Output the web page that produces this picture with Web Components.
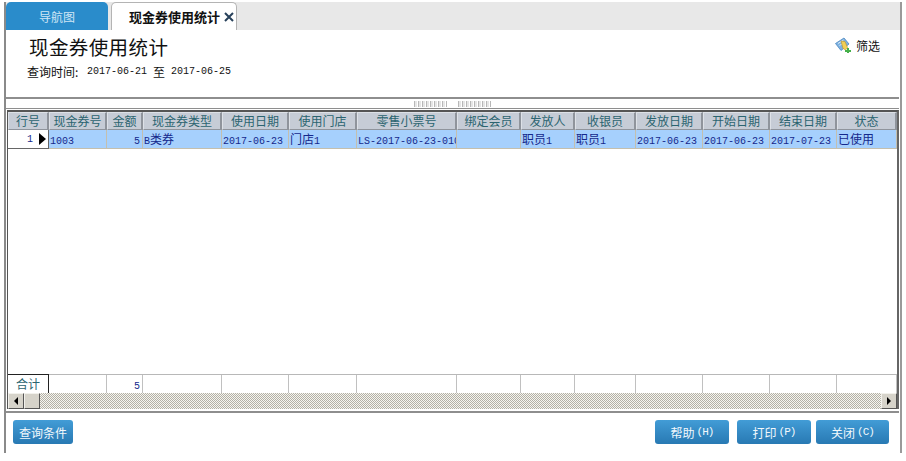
<!DOCTYPE html>
<html lang="zh">
<head>
<meta charset="utf-8">
<title>现金券使用统计</title>
<style>
  html, body { margin: 0; background: #fff; }
  body { font: 12px "Noto Sans CJK SC", sans-serif; width: 906px; height: 461px; overflow: hidden; }
</style>
</head>
<body>
<app-frame>
  <tab-strip slot="tabs">
    <strip-tab kind="nav">导航图</strip-tab>
    <strip-tab kind="active" closable>现金券使用统计</strip-tab>
  </tab-strip>
  <report-head
    title="现金券使用统计"
    from="2017-06-21"
    to="2017-06-25"></report-head>
  <split-grip></split-grip>
  <data-grid></data-grid>
  <action-bar>
    <action-button slot="left" w="60">查询条件</action-button>
    <action-button w="74">帮助<small-key>(H)</small-key></action-button>
    <action-button w="74" ml="8">打印<small-key>(P)</small-key></action-button>
    <action-button w="73" ml="5">关闭<small-key>(C)</small-key></action-button>
  </action-bar>
</app-frame>

<script>
const SANS = '"Noto Sans CJK SC", sans-serif';
const LATIN = '"Liberation Mono", "DejaVu Sans Mono", monospace';

// latin runs get the narrow mono face, the rest stays in the CJK face
const fmt = v => v.replace(/[\x21-\x7e]+/g, '<span class="l">$&</span>');

class AppFrame extends HTMLElement {
    constructor(){
        super();
        this.attachShadow({ mode: 'open' }).innerHTML = `
          <style>
            :host {
              display: flex;
              flex-direction: column;
              box-sizing: border-box;
              width: 898px;
              height: 451px;
              margin: 2px 0 0 4px;
              border-left: 2px solid #8a8a8a;
              border-right: 2px solid #9a9a9a;
            }
          </style>
          <slot name="tabs"></slot>
          <slot></slot>`;
    }
}

class TabStrip extends HTMLElement {
    constructor(){
        super();
        this.attachShadow({ mode: 'open' }).innerHTML = `
          <style>
            :host {
              display: flex;
              height: 28px;
              flex: none;
              background: #e8e8e8;
              gap: 3px;
            }
          </style>
          <slot></slot>`;
    }
}

class StripTab extends HTMLElement {
    constructor(){
        super();
        const close = this.hasAttribute('closable')
            ? '<svg width="10" height="10" viewBox="0 0 10 10"><path d="M1 1l8 8M9 1l-8 8" stroke="#27405a" stroke-width="2"/></svg>'
            : '';
        this.attachShadow({ mode: 'open' }).innerHTML = `
          <style>
            :host {
              display: flex;
              align-items: center;
              box-sizing: border-box;
              height: 28px;
              border-radius: 5px 5px 0 0;
              font-family: ${SANS};
            }
            :host([kind="nav"]) {
              width: 102px;
              padding-left: 33px;
              background: #2a8ccb;
              color: #cfe6f5;
              font-size: 12px;
            }
            :host([kind="active"]) {
              width: 126px;
              padding-left: 17px;
              background: #fff;
              border: 1px solid #b4b4b4;
              border-bottom: 0;
              color: #111;
              font-size: 13px;
              font-weight: 700;
              white-space: nowrap;
            }
            svg { margin-left: 4px; flex: none; }
          </style>
          <slot></slot>${close}`;
    }
}

class ReportHead extends HTMLElement {
    constructor(){
        super();
        this.attachShadow({ mode: 'open' }).innerHTML = `
          <style>
            :host {
              display: flex;
              justify-content: space-between;
              box-sizing: border-box;
              height: 67px;
              flex: none;
              padding: 4px 20px 0 21px;
              background: #fff;
            }
            h1 {
              margin: 0 0 0 2px;
              font: 400 19.5px/26px ${SANS};
              letter-spacing: .4px;
              color: #111;
            }
            .range { display: flex; margin-top: 4px; font: 12px/16px ${SANS}; color: #111; white-space: nowrap; }
            .range b { font: 400 10px/16px ${LATIN}; }
            .range .colon { width: 60px; }
            .range .to { margin: 0 6px; }
            .filter { display: flex; align-items: center; gap: 5px; height: 18px; margin-top: 2px; font: 12px ${SANS}; color: #111; }
            svg { display: block; }
          </style>
          <div>
            <h1>${this.getAttribute('title')}</h1>
            <div class="range"><span class="colon">查询时间:</span><b>${this.getAttribute('from')}</b><span class="to">至</span><b>${this.getAttribute('to')}</b></div>
          </div>
          <div class="filter">
            <svg width="16" height="16" viewBox="0 0 16 16">
              <path d="M.5 6.500 9 1l5 6-8 6.500z" fill="#7fb2e0" stroke="#4a86c0" stroke-width=".8"/>
              <path d="M3 6.500 8.500 3M4.500 8.500 10 5" stroke="#dcecfa"/>
              <path d="M6 4l4 .5 2.500 6-2 2.500-2.500-1.500z" fill="#f2cf55" stroke="#b8922a" stroke-width=".6"/>
              <path d="M12 11h2v2h2v2h-2v1h-2v-1h-2v-2h2z" fill="#45b04a"/>
            </svg>
            <span>筛选</span>
          </div>`;
    }
}

class SplitGrip extends HTMLElement {
    constructor(){
        super();
        this.attachShadow({ mode: 'open' }).innerHTML = `
          <style>
            :host {
              display: flex;
              justify-content: center;
              align-items: center;
              gap: 11px;
              box-sizing: border-box;
              height: 11px;
              flex: none;
              margin-right: 1px;
              border-top: 2px solid #8e8e8e;
              background: #fff;
            }
            i {
              width: 33px;
              height: 6px;
              background: repeating-linear-gradient(90deg, #b8b8b8 0 1px, #e6e6e6 1px 3px, #fff 3px 4px);
            }
          </style>
          <i></i><i></i>`;
    }
}

const COLUMNS = [
    ['现金券号', 58], ['金额', 36], ['现金券类型', 79], ['使用日期', 67], ['使用门店', 68],
    ['零售小票号', 100], ['绑定会员', 64], ['发放人', 54], ['收银员', 61], ['发放日期', 67],
    ['开始日期', 67], ['结束日期', 67], ['状态', 60]
];
const ROW = ['1003', '5', 'B类券', '2017-06-23', '门店1', 'LS-2017-06-23-010', '', '职员1', '职员1', '2017-06-23', '2017-06-23', '2017-07-23', '已使用'];
const TRACK = '41px ' + COLUMNS.map(c => c[1] + 'px').join(' ');

class DataGrid extends HTMLElement {
    constructor(){
        super();
        const head = COLUMNS.map(c => `<div class="hc">${c[0]}</div>`).join('');
        const cells = ROW.map((v, i) => `<div class="c${i === 1 ? ' right' : ''}">${fmt(v)}</div>`).join('');
        const foot = COLUMNS.map((c, i) => `<div class="fc${i === 1 ? ' right' : ''}">${i === 1 ? fmt('5') : ''}</div>`).join('');
        this.attachShadow({ mode: 'open' }).innerHTML = `
          <style>
            :host {
              display: flex;
              flex-direction: column;
              flex: none;
              box-sizing: border-box;
              height: 305px;
              margin-right: 1px;
              border-top: 1px solid #8e8e8e;
              border-bottom: 2px solid #8e8e8e;
              background: #fff;
            }
            .inner {
              flex: 1;
              display: flex;
              flex-direction: column;
              min-height: 0;
              margin: 1px 0 2px 1px;
              border: 1px solid #555;
              border-top: 2px solid #555;
              border-bottom: 0;
              border-right: 2px solid #666;
            }
            .row { display: grid; grid-template-columns: ${TRACK}; flex: none; }
            .head { height: 18px; }
            .hc {
              box-sizing: border-box;
              background: #c6ccd6;
              border-top: 1px solid #dde1e7;
              border-left: 1px solid #dde1e7;
              border-right: 2px solid #8f949c;
              border-bottom: 1px solid #8f949c;
              text-align: center;
              font: 12px/16px ${SANS};
              color: #2b6470;
              white-space: nowrap;
              overflow: hidden;
            }
            .body { height: 19px; }
            .l { font: 10px ${LATIN}; }
            .rh {
              box-sizing: border-box;
              display: flex;
              align-items: center;
              justify-content: flex-end;
              gap: 6px;
              padding-right: 2px;
              background: #fff;
              border-right: 1px solid #666;
              border-bottom: 1px solid #666;
              color: #14288c;
            }
            .rh i { width: 0; height: 0; border-left: 7px solid #000; border-top: 6px solid transparent; border-bottom: 6px solid transparent; }
            .c {
              box-sizing: border-box;
              padding-left: 1px;
              background: #a6d0fd;
              border-right: 1px solid #c4bfae;
              border-bottom: 1px solid #c4bfae;
              font: 12px/18px ${SANS};
              color: #14288c;
              white-space: nowrap;
              overflow: hidden;
            }
            .right { text-align: right; padding-right: 2px; }
            .fill { flex: 1; min-height: 0; }
            .foot { height: 18px; border-top: 1px solid #b8b8b8; }
            .fh {
              box-sizing: border-box;
              margin-top: -1px;
              border: 1px solid #222;
              border-left: 0;
              text-align: center;
              font: 12px/18px ${SANS};
              color: #2b6470;
            }
            .fc {
              box-sizing: border-box;
              border-right: 1px solid #c0c0c0;
              border-bottom: 1px solid #b8b8b8;
              font: 12px/18px ${SANS};
              color: #14288c;
            }
            .scroll {
              display: flex;
              flex: none;
              height: 16px;
              background: repeating-conic-gradient(#b4b1a6 0 25%, #f6f5f0 0 50%) 0 0 / 2px 2px;
            }
            .btn {
              box-sizing: border-box;
              width: 16px;
              height: 16px;
              background: #d6d3ca;
              border: 1px solid;
              border-color: #f2f1ec #555 #555 #f2f1ec;
              display: flex;
              align-items: center;
              justify-content: center;
            }
            .gap { flex: 1; }
            .tl { width: 0; height: 0; border-right: 4px solid #000; border-top: 4px solid transparent; border-bottom: 4px solid transparent; }
            .tr { width: 0; height: 0; border-left: 4px solid #000; border-top: 4px solid transparent; border-bottom: 4px solid transparent; }
          </style>
          <div class="inner">
            <div class="row head"><div class="hc">行号</div>${head}</div>
            <div class="row body"><div class="rh"><span class="l">1</span><i></i></div>${cells}</div>
            <div class="fill"></div>
            <div class="row foot"><div class="fh">合计</div>${foot}</div>
            <div class="scroll">
              <div class="btn"><span class="tl"></span></div>
              <div class="btn"></div>
              <div class="gap"></div>
              <div class="btn"><span class="tr"></span></div>
            </div>
          </div>`;
    }
}

class ActionBar extends HTMLElement {
    constructor(){
        super();
        this.attachShadow({ mode: 'open' }).innerHTML = `
          <style>
            :host {
              display: flex;
              align-items: flex-start;
              flex: 1;
              padding: 7px 11px 0 7px;
              background: #fff;
            }
            .left { flex: 1; display: flex; }
          </style>
          <div class="left"><slot name="left"></slot></div>
          <slot></slot>`;
    }
}

class ActionButton extends HTMLElement {
    constructor(){
        super();
        this.attachShadow({ mode: 'open' }).innerHTML = `
          <style>
            :host {
              display: flex;
              align-items: center;
              justify-content: center;
              box-sizing: border-box;
              width: ${this.getAttribute('w')}px;
              height: 24px;
              margin-left: ${this.getAttribute('ml') || 0}px;
              border-radius: 3px;
              background: linear-gradient(#429cd6, #2879b3);
              color: #f2f8fc;
              font: 12px ${SANS};
            }
          </style>
          <slot></slot>`;
    }
}

class SmallKey extends HTMLElement {
    constructor(){
        super();
        this.attachShadow({ mode: 'open' }).innerHTML = `
          <style>
            :host { display: inline; margin-left: 2px; font: 11px "Liberation Mono", monospace; letter-spacing: -1px; }
          </style>
          <slot></slot>`;
    }
}

customElements.define('app-frame', AppFrame);
customElements.define('tab-strip', TabStrip);
customElements.define('strip-tab', StripTab);
customElements.define('report-head', ReportHead);
customElements.define('split-grip', SplitGrip);
customElements.define('data-grid', DataGrid);
customElements.define('action-bar', ActionBar);
customElements.define('action-button', ActionButton);
customElements.define('small-key', SmallKey);
</script>
</body>
</html>
